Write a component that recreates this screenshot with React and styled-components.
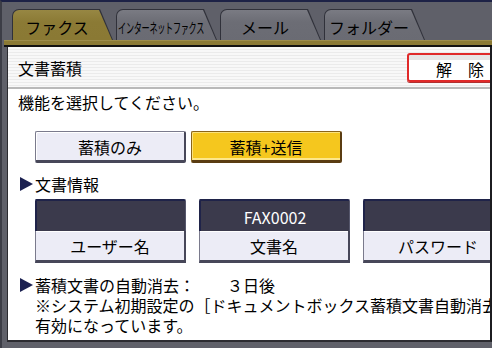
import { createGlobalStyle, styled } from "styled-components";

const GlobalStyle = createGlobalStyle`
  html, body {
    margin: 0;
    padding: 0;
    background: #5f6069;
  }
  body {
    font-family: "Noto Sans CJK JP", "Noto Sans", sans-serif;
    color: #000;
  }
`;

const tabs = [
  { label: "ファクス", active: true },
  { label: "インターネットファクス", narrow: true },
  { label: "メール" },
  { label: "フォルダー" },
];

const docFields = [
  { value: "", label: "ユーザー名" },
  { value: "FAX0002", label: "文書名" },
  { value: "", label: "パスワード" },
];

export default function App() {
  return (
    <>
      <GlobalStyle />
      <Screen>
        <TabBar>
          {tabs.map((t) => (
            <Tab key={t.label}>
              <TabFace $active={t.active}>
                {t.narrow ? <NarrowLabel>{t.label}</NarrowLabel> : t.label}
              </TabFace>
            </Tab>
          ))}
        </TabBar>
        <GoldStrip />
        <Panel>
          <TitleBar>
            <Title>文書蓄積</Title>
            <ReleaseButton>解　除</ReleaseButton>
          </TitleBar>
          <Body>
            <Prompt>機能を選択してください。</Prompt>
            <ModeRow>
              <ModeButton>蓄積のみ</ModeButton>
              <ModeButton $selected>蓄積+送信</ModeButton>
            </ModeRow>
            <SectionLabel>
              <Arrow />
              文書情報
            </SectionLabel>
            <FieldRow>
              {docFields.map((f) => (
                <FieldCell key={f.label}>
                  <FieldValue>{f.value}</FieldValue>
                  <FieldButton>{f.label}</FieldButton>
                </FieldCell>
              ))}
            </FieldRow>
            <InfoLine>
              <Arrow />
              蓄積文書の自動消去：　　３日後
            </InfoLine>
            <NoteLine>※システム初期設定の［ドキュメントボックス蓄積文書自動消去］が</NoteLine>
            <NoteLine>有効になっています。</NoteLine>
          </Body>
        </Panel>
      </Screen>
    </>
  );
}

const Screen = styled.div`
  width: 492px;
  height: 348px;
  box-sizing: border-box;
  overflow: hidden;
  background: #5f6069;
  border-top: 2px solid #1d2246;
  border-left: 2px solid #3c3d46;
`;

const TabBar = styled.div`
  display: flex;
  gap: 3px;
  padding: 7px 0 0 10px;
  height: 38px;
  box-sizing: border-box;
`;

// outline colour sits behind, the face is clipped 1px inside it
const Tab = styled.div`
  width: 101px;
  height: 31px;
  padding: 1px 0 0 1px;
  box-sizing: border-box;
  background: #30313a;
  border-top-left-radius: 7px;
  clip-path: polygon(0 0, calc(100% - 13px) 0, 100% 100%, 0 100%);
`;

const TabFace = styled.div`
  height: 100%;
  display: flex;
  align-items: center;
  justify-content: center;
  padding: 3px 12px 0 0;
  box-sizing: border-box;
  border-top-left-radius: 6px;
  font-size: 16px;
  line-height: 1;
  white-space: nowrap;
  background: ${({ $active }) =>
    $active
      ? "linear-gradient(#978743, #8b7a35 40%, #8a7934)"
      : "linear-gradient(#7a7b83, #6c6d75 40%, #6a6b73)"};
  clip-path: polygon(0 0, calc(100% - 14px) 0, calc(100% - 1px) 100%, 0 100%);
`;

const NarrowLabel = styled.span`
  display: inline-block;
  font-size: 14px;
  transform: scaleX(0.58);
  letter-spacing: -0.5px;
  margin: 0 -40px;
`;

const GoldStrip = styled.div`
  height: 4px;
  margin-left: 2px;
  background: #8a7934;
  border-top: 1px solid #9c8c4a;
  border-bottom: 2px solid #111;
`;

const Panel = styled.div`
  margin-left: 5px;
  width: 485px;
  height: 295px;
  box-sizing: border-box;
  overflow: hidden;
  background: #fff;
  border-left: 1px solid #2b2b30;
  border-right: 2px solid #1c1c20;
  border-bottom: 2px solid #2b2b30;
`;

const TitleBar = styled.div`
  display: flex;
  align-items: center;
  justify-content: space-between;
  height: 42px;
  box-sizing: border-box;
  padding-left: 10px;
  background: repeating-linear-gradient(
    to bottom,
    #f8f8f8 0 2px,
    #ebebeb 2px 3px
  );
  border-bottom: 2px solid #b9b9b9;
`;

const Title = styled.div`
  font-size: 16px;
  line-height: 20px;
  margin-top: 1px;
`;

const ReleaseButton = styled.div`
  width: 106px;
  height: 29px;
  flex-shrink: 0;
  margin-right: -23px;
  box-sizing: border-box;
  display: flex;
  align-items: center;
  justify-content: center;
  padding-top: 3px;
  font-size: 16px;
  border: 2px solid #e02a2a;
  border-radius: 3px;
  background: linear-gradient(#e6e6e6 0 5px, #fff 5px);
  box-shadow: 0 1px 0 #b03030;
`;

const Body = styled.div`
  padding: 3px 0 0 10px;
`;

const Prompt = styled.div`
  font-size: 16px;
  line-height: 20px;
`;

const ModeRow = styled.div`
  display: flex;
  gap: 5px;
  margin: 19px 0 0 17px;
`;

const ModeButton = styled.div`
  width: 151px;
  height: 32px;
  box-sizing: border-box;
  display: flex;
  align-items: center;
  justify-content: center;
  font-size: 16px;
  padding-top: 1px;
  background: ${({ $selected }) => ($selected ? "#f5c71e" : "#ececf6")};
  border: 1px solid ${({ $selected }) => ($selected ? "#8a6418" : "#7a7a8c")};
  border-right: 2px solid ${({ $selected }) => ($selected ? "#5a3c12" : "#474759")};
  border-bottom: 3px solid ${({ $selected }) => ($selected ? "#5a3c12" : "#474759")};
  border-radius: 2px;
  box-shadow: ${({ $selected }) =>
    $selected
      ? "inset 1px 1px 0 #fbe27c, inset 0 -2px 0 #fde78a"
      : "inset 1px 1px 0 #ffffff"};
`;

const Arrow = styled.span`
  display: inline-block;
  width: 0;
  height: 0;
  border-left: 13px solid #1b2050;
  border-top: 7px solid transparent;
  border-bottom: 7px solid transparent;
  margin-right: 2px;
`;

const SectionLabel = styled.div`
  display: flex;
  align-items: center;
  margin: 11px 0 0 2px;
  font-size: 16px;
  line-height: 20px;
`;

const FieldRow = styled.div`
  display: flex;
  gap: 13px;
  margin: 5px 0 0 17px;
`;

const FieldCell = styled.div`
  width: 151px;
  flex-shrink: 0;
  display: flex;
  flex-direction: column;
`;

const FieldValue = styled.div`
  height: 32px;
  box-sizing: border-box;
  display: flex;
  align-items: center;
  justify-content: center;
  padding-top: 2px;
  font-size: 16px;
  color: #fff;
  background: #3b3a4c;
  border: 2px solid #1f2349;
  border-right: 1px solid #56576c;
  border-bottom: 0;
  border-radius: 2px 2px 0 0;
`;

const FieldButton = styled.div`
  height: 32px;
  box-sizing: border-box;
  display: flex;
  align-items: center;
  justify-content: center;
  font-size: 16px;
  background: #ececf6;
  border-left: 1px solid #7a7a8c;
  border-right: 2px solid #474759;
  border-bottom: 3px solid #474759;
  box-shadow: inset 0 1px 0 #ffffff;
`;

const InfoLine = styled.div`
  display: flex;
  align-items: center;
  margin: 12px 0 0 2px;
  font-size: 16px;
  line-height: 20px;
  white-space: nowrap;
`;

const NoteLine = styled.div`
  margin-left: 17px;
  font-size: 16px;
  line-height: 20px;
  white-space: nowrap;
`;
